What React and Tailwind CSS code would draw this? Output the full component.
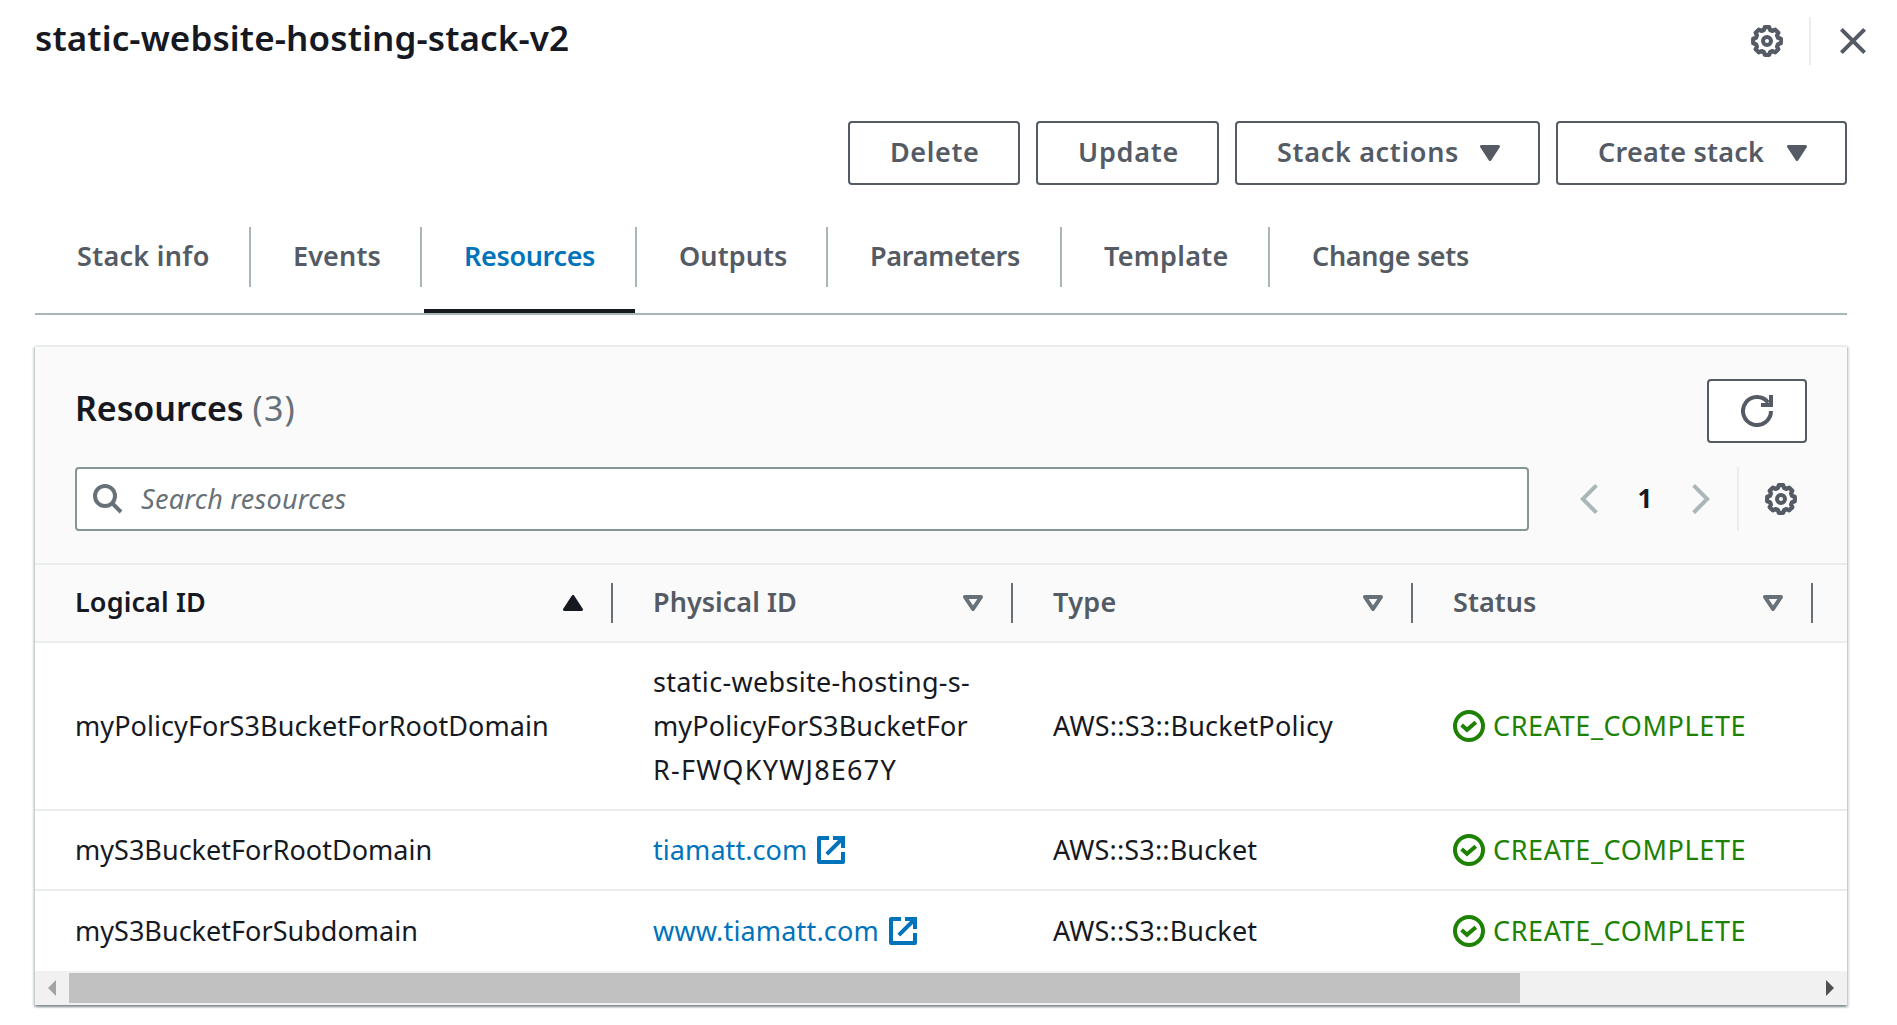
import React from "react";

const gearPath = (() => {
  const pts = [];
  const add = (r, deg) => {
    const a = (deg * Math.PI) / 180;
    pts.push(`${(16 + r * Math.cos(a)).toFixed(2)} ${(16 + r * Math.sin(a)).toFixed(2)}`);
  };
  for (let i = 0; i < 8; i++) {
    const base = i * 45 - 90;
    add(14, base - 9);
    add(14, base + 9);
    add(11.5, base + 16);
    add(11.5, base + 29);
  }
  return `M${pts.join("L")}Z`;
})();

const Gear = () => (
  <svg className="h-8 w-8 shrink-0 text-[#545b64]" viewBox="0 0 32 32" fill="none" stroke="currentColor" strokeWidth="4" strokeLinejoin="round">
    <path d={gearPath} strokeWidth="4.2" />
    <circle cx="16" cy="16" r="4" />
  </svg>
);

const Close = () => (
  <svg className="h-[26px] w-[26px] text-[#545b64]" viewBox="0 0 26 26" stroke="currentColor" strokeWidth="4">
    <path d="M1.4 1.4L24.6 24.6M24.6 1.4L1.4 24.6" />
  </svg>
);

const CaretDown = () => (
  <svg className="h-4 w-5" viewBox="0 0 20 16" fill="currentColor" stroke="currentColor" strokeWidth="3" strokeLinejoin="round">
    <path d="M1.5 1.5H18.5L10 14.5Z" />
  </svg>
);

const CaretUp = () => (
  <svg className="h-4 w-5 text-[#16191f]" viewBox="0 0 20 16" fill="currentColor" stroke="currentColor" strokeWidth="3" strokeLinejoin="round">
    <path d="M1.5 14.5H18.5L10 1.5Z" />
  </svg>
);

const CaretOutline = () => (
  <svg className="h-4 w-5 text-[#687078]" viewBox="0 0 20 16" fill="none" stroke="currentColor" strokeWidth="4" strokeLinejoin="round">
    <path d="M2 2H18L10 14Z" />
  </svg>
);

const Refresh = () => (
  <svg className="h-8 w-8" viewBox="0 0 32 32" fill="none" stroke="currentColor" strokeWidth="4">
    <path d="M30 16A14 14 0 1 1 27.2 7.6" />
    <path d="M20 8H28V0H32V12H20Z" fill="currentColor" stroke="none" />
  </svg>
);

const Search = () => (
  <svg className="h-[30px] w-[30px] text-[#687078]" viewBox="0 0 30 30" fill="none" stroke="currentColor" strokeWidth="4">
    <circle cx="12" cy="12" r="10" />
    <path d="M19 19L28 28" />
  </svg>
);

const Chevron = ({ flip }) => (
  <svg className={flip ? "h-[30px] w-[18px] rotate-180 text-[#aab7b8]" : "h-[30px] w-[18px] text-[#aab7b8]"} viewBox="0 0 18 30" fill="none" stroke="currentColor" strokeWidth="4">
    <path d="M16.4 1.4L2.8 15L16.4 28.6" />
  </svg>
);

const External = () => (
  <svg className="h-7 w-7" viewBox="0 0 28 28" fill="none" stroke="currentColor" strokeWidth="4" strokeLinejoin="round">
    <path d="M12 2H2V26H26V16" />
    <path d="M16 0H28V12H24V4H16Z" fill="currentColor" stroke="none" />
    <path d="M25.5 2.5L9.8 18.2" />
  </svg>
);

const Check = () => (
  <svg className="h-8 w-8" viewBox="0 0 32 32" fill="none" stroke="currentColor" strokeWidth="4">
    <circle cx="16" cy="16" r="14" />
    <path d="M8.6 15L14 19.8L22.8 12.2" />
  </svg>
);

const actions = [
  { label: "Delete", width: "w-[172px]", text: "tracking-[0.6px]" },
  { label: "Update", width: "ml-4 w-[183px]", text: "tracking-[0.75px]" },
  { label: "Stack actions", width: "ml-4 w-[305px]", text: "tracking-[0.68px]", menu: true },
  { label: "Create stack", width: "ml-4 w-[291px]", text: "tracking-[0.24px]", menu: true },
];

const tabs = [
  { label: "Stack info", cls: "w-[216px] pl-[42px] tracking-[0.3px]" },
  { label: "Events", cls: "w-[171px] pl-[42px] tracking-[0.14px]" },
  { label: "Resources", cls: "w-[215px] pl-[42px] tracking-[-0.35px]", active: true },
  { label: "Outputs", cls: "w-[191px] pl-[42px] tracking-[0.08px]" },
  { label: "Parameters", cls: "w-[234px] pl-[42px] tracking-[-0.28px]" },
  { label: "Template", cls: "w-[208px] pl-[42px] tracking-[0.29px]" },
  { label: "Change sets", cls: "w-[220px] pl-[42px] tracking-[-0.33px]", last: true },
];

const columns = [
  { label: "Logical ID", cls: "w-[578px] pl-10 tracking-[0.12px]", sorted: true },
  { label: "Physical ID", cls: "w-[400px] pl-10 tracking-[0.04px]" },
  { label: "Type", cls: "w-[400px] pl-10 tracking-[0.33px]" },
  { label: "Status", cls: "w-[400px] pl-10 tracking-[0.04px]" },
];

const rows = [
  {
    id: "myPolicyForS3BucketForRootDomain",
    height: "h-[168px]",
    idCls: "tracking-[0.07px]",
    lines: [
      { text: "static-website-hosting-s-", cls: "tracking-[0.32px]" },
      { text: "myPolicyForS3BucketFor", cls: "tracking-[0.12px]" },
      { text: "R-FWQKYWJ8E67Y", cls: "tracking-[1.25px]" },
    ],
    type: "AWS::S3::BucketPolicy",
    typeCls: "tracking-[0.23px]",
  },
  {
    id: "myS3BucketForRootDomain",
    height: "h-20",
    idCls: "tracking-[0.02px]",
    link: "tiamatt.com",
    linkCls: "tracking-[0.07px]",
    type: "AWS::S3::Bucket",
    typeCls: "tracking-[0.15px]",
  },
  {
    id: "myS3BucketForSubdomain",
    height: "h-20",
    idCls: "tracking-[0.02px]",
    link: "www.tiamatt.com",
    linkCls: "tracking-[0.17px]",
    type: "AWS::S3::Bucket",
    typeCls: "tracking-[0.15px]",
    last: true,
  },
];

function TopBar() {
  return (
    <header className="flex h-[121px] items-start justify-between pr-[31px] pl-[35px]">
      <h1 className="pt-4 text-[35px] leading-[44px] font-semibold tracking-[0.12px] text-[#16191f]">
        static-website-hosting-stack-v2
      </h1>
      <div className="mt-[17px] flex h-12 items-center">
        <Gear />
        <div className="ml-[26px] h-12 w-[2px] bg-[#eaeded]" />
        <div className="ml-[29px]">
          <Close />
        </div>
      </div>
    </header>
  );
}

function Actions() {
  return (
    <div className="flex justify-end pr-[50px]">
      {actions.map((a) => (
        <button
          key={a.label}
          className={`flex h-16 items-center rounded-[4px] border-2 border-[#545b64] bg-white pl-10 font-semibold text-[#545b64] ${a.width}`}
        >
          <span className={`-mt-[3px] whitespace-nowrap ${a.text}`}>{a.label}</span>
          {a.menu && (
            <span className="mr-[38px] ml-auto">
              <CaretDown />
            </span>
          )}
        </button>
      ))}
    </div>
  );
}

function Tabs() {
  return (
    <nav className="mt-[42px] mr-[50px] ml-[35px] flex h-[88px] border-b-2 border-[#aab7b8]">
      {tabs.map((t) => (
        <div
          key={t.label}
          className={`relative h-[60px] leading-[57px] font-semibold whitespace-nowrap ${t.cls} ${
            t.last ? "" : "border-r-2 border-[#aab7b8]"
          } ${t.active ? "text-[#0073bb]" : "text-[#545b64]"}`}
        >
          {t.label}
          {t.active && <div className="absolute top-[82px] right-0 left-[2px] h-1 bg-[#16191f]" />}
        </div>
      ))}
    </nav>
  );
}

function PanelHeader() {
  return (
    <div className="h-[220px] border-y-2 border-[#eaeded] bg-[#fafafa] pl-10">
      <div className="flex justify-between pt-8 pr-10">
        <h2 className="pt-[7px] text-[34px] leading-[44px] font-semibold tracking-[-0.05px] text-[#16191f]">
          Resources
          <span className="ml-[9px] font-normal tracking-[1.2px] text-[#687078]">(3)</span>
        </h2>
        <button className="flex h-16 w-[100px] items-center justify-center rounded-[4px] border-2 border-[#545b64] bg-white text-[#545b64]">
          <Refresh />
        </button>
      </div>
      <div className="mt-6 flex h-16 items-center">
        <div className="flex h-16 w-[1454px] items-center rounded-[4px] border-2 border-[#879596] bg-white pl-4">
          <Search />
          <span className="-mt-px ml-[18px] tracking-[0.26px] text-[#687078] italic">Search resources</span>
        </div>
        <div className="ml-[51px] flex h-16 items-center">
          <Chevron />
          <span className="-mt-[3px] w-[94px] text-center text-[26px] font-bold text-[#16191f]">1</span>
          <Chevron flip />
          <div className="ml-[27px] h-16 w-[2px] bg-[#eaeded]" />
          <div className="ml-[26px]">
            <Gear />
          </div>
        </div>
      </div>
    </div>
  );
}

function TableHead() {
  return (
    <div className="flex h-[78px] items-center border-b-2 border-[#eaeded] bg-[#fafafa] font-semibold">
      {columns.map((c) => (
        <div
          key={c.label}
          className={`flex h-10 items-center justify-between border-r-2 border-[#687078] pr-7 ${c.cls} ${
            c.sorted ? "text-[#16191f]" : "text-[#545b64]"
          }`}
        >
          <span className="-mt-[3px]">{c.label}</span>
          {c.sorted ? <CaretUp /> : <CaretOutline />}
        </div>
      ))}
    </div>
  );
}

function Row({ row }) {
  return (
    <div className={`flex items-center text-[#16191f] ${row.height} ${row.last ? "" : "border-b-2 border-[#eaeded]"}`}>
      <div className={`-mt-px w-[618px] pl-10 ${row.idCls}`}>{row.id}</div>
      <div className="w-[400px]">
        {row.lines ? (
          <div className="-mt-px leading-[44px]">
            {row.lines.map((l) => (
              <div key={l.text} className={l.cls}>
                {l.text}
              </div>
            ))}
          </div>
        ) : (
          <a className="flex items-center gap-[10px] text-[#0073bb]">
            <span className={`-mt-px ${row.linkCls}`}>{row.link}</span>
            <External />
          </a>
        )}
      </div>
      <div className={`-mt-px w-[400px] ${row.typeCls}`}>{row.type}</div>
      <div className="flex items-center gap-2 text-[#1d8102]">
        <Check />
        <span className="-mt-px tracking-[0.62px]">CREATE_COMPLETE</span>
      </div>
    </div>
  );
}

function ScrollBar() {
  return (
    <div className="flex h-[34px] items-center bg-[#f1f1f1]">
      <svg className="ml-[13px] h-4 w-2 text-[#a3a3a3]" viewBox="0 0 8 16" fill="currentColor">
        <path d="M8 0V16L0 8Z" />
      </svg>
      <div className="ml-[13px] h-[30px] w-[1451px] bg-[#c1c1c1]" />
      <svg className="mr-[13px] ml-auto h-4 w-2 text-[#505050]" viewBox="0 0 8 16" fill="currentColor">
        <path d="M0 0V16L8 8Z" />
      </svg>
    </div>
  );
}

export default function App() {
  return (
    <div className="h-[1025px] w-[1897px] overflow-hidden bg-white font-['Noto_Sans',sans-serif] text-[27px] leading-[44px]">
      <TopBar />
      <Actions />
      <Tabs />
      <section className="mt-[30px] ml-[35px] w-[1812px] bg-white shadow-[0_2px_2px_0_rgba(0,28,36,0.3),2px_2px_2px_0_rgba(0,28,36,0.15),-2px_2px_2px_0_rgba(0,28,36,0.15)]">
        <PanelHeader />
        <TableHead />
        {rows.map((r) => (
          <Row key={r.id} row={r} />
        ))}
        <ScrollBar />
      </section>
    </div>
  );
}
